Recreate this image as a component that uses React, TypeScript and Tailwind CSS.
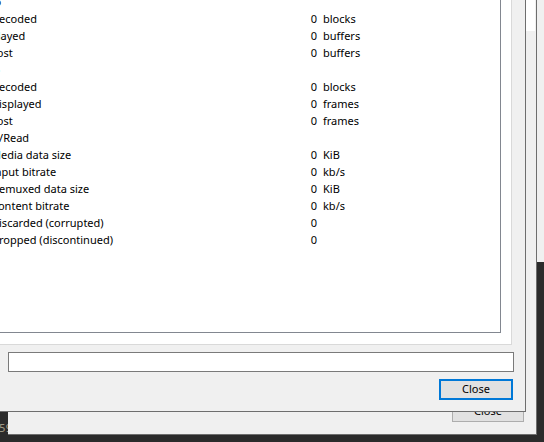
const rows: { label: string; parent?: boolean; value?: string; unit?: string }[] = [
  { label: 'Audio', parent: true },
  { label: 'Decoded', value: '0', unit: 'blocks' },
  { label: 'Played', value: '0', unit: 'buffers' },
  { label: 'Lost', value: '0', unit: 'buffers' },
  { label: 'Video', parent: true },
  { label: 'Decoded', value: '0', unit: 'blocks' },
  { label: 'Displayed', value: '0', unit: 'frames' },
  { label: 'Lost', value: '0', unit: 'frames' },
  { label: 'Input/Read', parent: true },
  { label: 'Media data size', value: '0', unit: 'KiB' },
  { label: 'Input bitrate', value: '0', unit: 'kb/s' },
  { label: 'Demuxed data size', value: '0', unit: 'KiB' },
  { label: 'Content bitrate', value: '0', unit: 'kb/s' },
  { label: 'Discarded (corrupted)', value: '0' },
  { label: 'Dropped (discontinued)', value: '0' },
];

const font = "font-['Noto_Sans',sans-serif]";

export default function App() {
  return (
    <div className={`relative h-[442px] w-[544px] overflow-hidden bg-[#2b2b2b] text-[11px] text-black ${font}`}>
      {/* editor line number peeking out */}
      <div className="absolute left-[-1px] top-[421px] font-['DejaVu_Sans_Mono',monospace] text-[11px] text-[#9d9683]">
        59
      </div>

      {/* window further back, right edge */}
      <div className="absolute left-[500px] top-0 h-[262px] w-[60px] bg-[#f0f0f0]" />

      {/* back dialog */}
      <div className="absolute left-[8px] top-0 flex h-[435px] w-[529px] flex-col border-b border-r border-[#6e6e6e] bg-[#f0f0f0]">
        <div className="ml-auto mr-[1px] h-[31px] w-[40px] bg-white" />
        <div className="flex-1" />
        <div className="mb-[12px] mr-[12px] flex justify-end">
          <button
            type="button"
            className="flex h-[22px] w-[72px] items-center justify-center border border-[#adadad] bg-[#e1e1e1] text-[11px]"
          >
            Close
          </button>
        </div>
      </div>

      {/* media information dialog */}
      <div className="absolute left-0 top-0 flex h-[412px] w-[526px] flex-col border-b border-r border-[#6e6e6e] bg-[#f0f0f0]">
        <div className="ml-[-20px] mr-[13px] mt-[-18px] flex h-[363px] flex-col border-b border-r border-[#d9d9d9] bg-white pb-[11px] pr-[10px] pt-[11px]">
          <div className="flex-1 overflow-hidden border-b border-r border-[#828790] bg-white">
            {rows.map((row, i) => (
              <div key={i} className="ml-[-9px] flex h-[17px] items-center leading-[17px] whitespace-nowrap">
                <div className={`w-[304px] ${row.parent ? '' : 'pl-[20px]'}`}>{row.label}</div>
                <div className="w-[42px] text-right">{row.value}</div>
                <div className="pl-[6px]">{row.unit}</div>
              </div>
            ))}
          </div>
        </div>
        <div className="ml-[8px] mr-[11px] mt-[7px] h-[20px] border border-[#7a7a7a] bg-white" />
        <div className="mr-[12px] mt-[7px] flex justify-end">
          <button
            type="button"
            className="flex h-[21px] w-[74px] items-center justify-center border-2 border-[#0078d7] bg-[#e1e1e1] text-[11px]"
          >
            Close
          </button>
        </div>
      </div>
    </div>
  );
}
